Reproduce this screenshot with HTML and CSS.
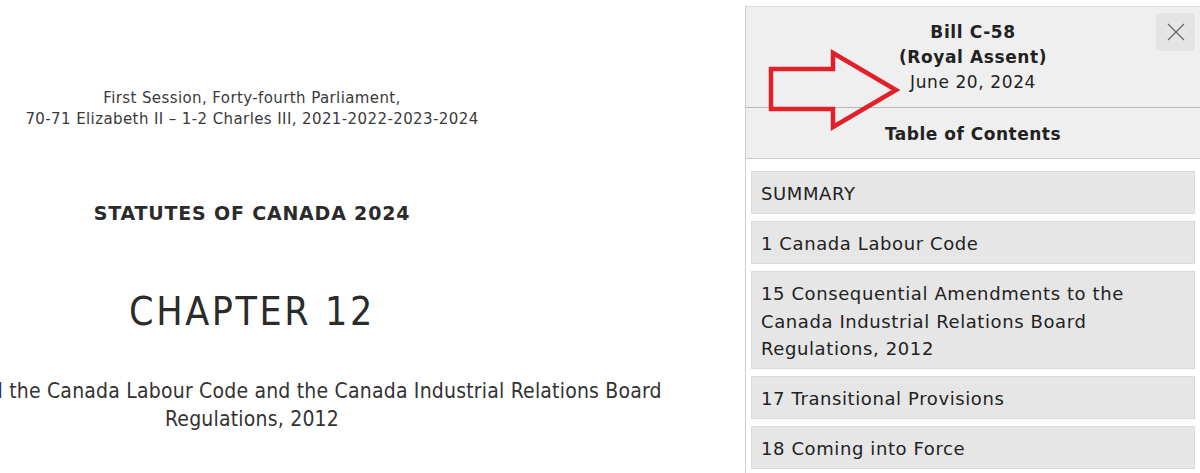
FILE: index.html
```html
<!DOCTYPE html>
<html>
<head>
<meta charset="utf-8">
<link rel="stylesheet" href="styles.css">
</head>
<body>
<div class="page">
  <main class="doc">
    <div class="doc-inner">
      <p class="session">First Session, Forty-fourth Parliament,<br>70-71 Elizabeth II – 1-2 Charles III, 2021-2022-2023-2024</p>
      <h1 class="statutes">STATUTES OF CANADA 2024</h1>
      <h2 class="chapter">CHAPTER 12</h2>
      <p class="title">An Act to amend the Canada Labour Code and the Canada Industrial Relations Board Regulations, 2012</p>
    </div>
  </main>
  <aside class="panel">
    <header class="panel-head">
      <div class="bill"><strong>Bill C-58</strong><br><strong>(Royal Assent)</strong><br>June 20, 2024</div>
      <button class="close" aria-label="Close">
        <svg width="22" height="22" viewBox="0 0 22 22"><path d="M3 3 L19 19 M19 3 L3 19" stroke="#666" stroke-width="1.2" fill="none"/></svg>
      </button>
    </header>
    <div class="toc-title">Table of Contents</div>
    <ul class="toc">
      <li class="toc-item">SUMMARY</li>
      <li class="toc-item">1 Canada Labour Code</li>
      <li class="toc-item">15 Consequential Amendments to the Canada Industrial Relations Board Regulations, 2012</li>
      <li class="toc-item">17 Transitional Provisions</li>
      <li class="toc-item">18 Coming into Force</li>
    </ul>
  </aside>
</div>
<svg class="arrow" width="140" height="90" viewBox="765 45 140 90">
  <polygon points="771,69 833,69 833,53 896,90 833,127 833,109 771,109" fill="none" stroke="#e3202a" stroke-width="4.5" stroke-linejoin="miter"/>
</svg>
</body>
</html>
```
FILE: styles.css
```css
html, body {
  margin: 0;
  padding: 0;
  background: #fff;
  overflow: hidden;
}
body {
  font-family: "DejaVu Sans", Verdana, sans-serif;
  color: #333;
  width: 1200px;
  height: 473px;
  position: relative;
}
.page {
  display: flex;
  height: 473px;
}
.doc {
  width: 745px;
  flex: none;
  overflow: hidden;
}
.doc-inner {
  margin-left: -200px;
  width: 904px;
  text-align: center;
  padding-top: 88px;
}
.session {
  margin: 0;
  font-size: 15px;
  line-height: 21px;
  letter-spacing: 0.4px;
  color: #3a3a3a;
}
.statutes {
  margin: 71px 0 0;
  font-size: 19px;
  line-height: 24px;
  letter-spacing: 0.8px;
  font-weight: bold;
  color: #2b2b2b;
}
.chapter {
  margin: 64px 0 0;
  font-family: "DejaVu Sans Condensed", "DejaVu Sans", sans-serif;
  font-weight: normal;
  font-size: 39px;
  line-height: 46px;
  letter-spacing: 2.6px;
  color: #2b2b2b;
}
.title {
  margin: 42px 0 0;
  font-family: "DejaVu Sans Condensed", "DejaVu Sans", sans-serif;
  font-size: 21px;
  line-height: 28px;
  letter-spacing: 0.2px;
  color: #333;
}
.panel {
  flex: none;
  width: 454px;
  margin-top: 6px;
  border-left: 1px solid #cfcfcf;
  border-top: 1px solid #dcdcdc;
  background: #fff;
}
.panel-head {
  position: relative;
  background: #efefef;
  border-bottom: 1px solid #b9b9b9;
  padding: 13px 0 12px;
  text-align: center;
  font-size: 17px;
  line-height: 25px;
  letter-spacing: 0.6px;
  color: #222;
}
.bill strong { font-weight: bold; }
.close {
  position: absolute;
  top: 6px;
  right: 5px;
  width: 39px;
  height: 38px;
  border: none;
  border-radius: 4px;
  background: #e4e4e4;
  padding: 0;
  display: flex;
  align-items: center;
  justify-content: center;
}
.toc-title {
  background: #efefef;
  border-bottom: 1px solid #c8c8c8;
  text-align: center;
  font-weight: bold;
  font-size: 17px;
  line-height: 25px;
  letter-spacing: 0.5px;
  padding: 14px 0 11px;
  color: #222;
}
.toc {
  list-style: none;
  margin: 0;
  padding: 12px 5px 0 5px;
  display: flex;
  flex-direction: column;
  gap: 7px;
}
.toc-item {
  background: #e6e6e6;
  border: 1px solid #dadada;
  padding: 8px 9px 5.5px;
  font-size: 18px;
  line-height: 27.5px;
  letter-spacing: 0.6px;
  color: #222;
}
.arrow {
  position: absolute;
  left: 765px;
  top: 45px;
}
```
